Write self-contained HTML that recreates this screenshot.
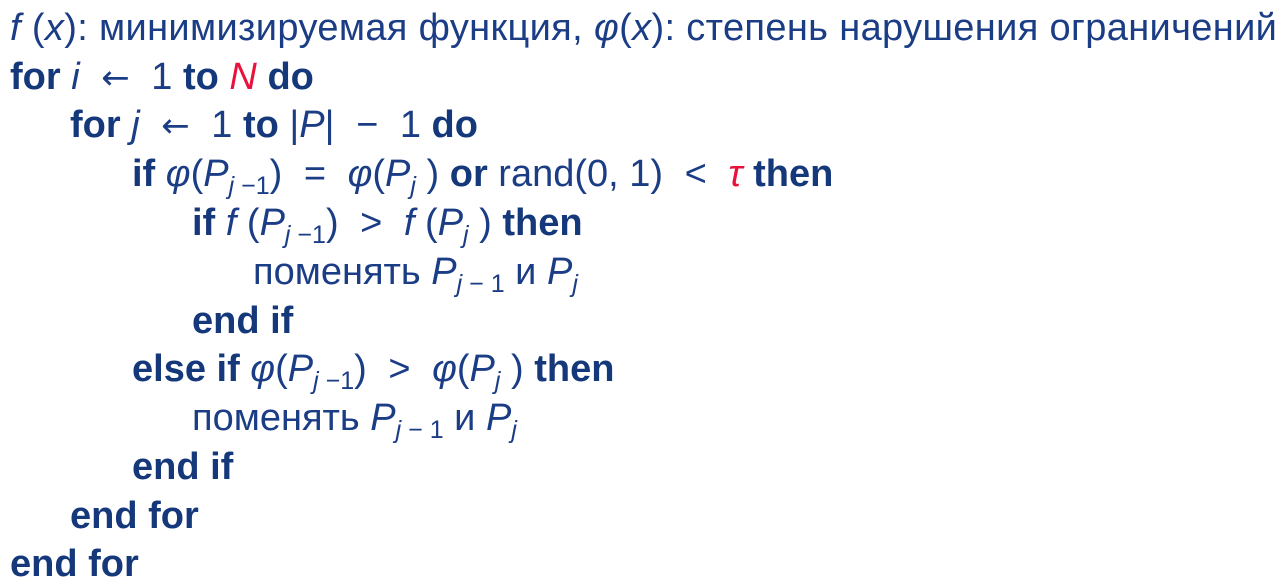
<!DOCTYPE html>
<html><head><meta charset="utf-8"><style>
html,body{margin:0;padding:0;background:#fff;width:1280px;height:582px;overflow:hidden}
body{font-family:"Liberation Sans","DejaVu Sans",sans-serif;color:#1b3d85;font-size:38px}
.l{position:absolute;white-space:nowrap;line-height:40px}
b{font-weight:bold;color:#14387a;letter-spacing:0}
i{font-style:italic}
.r{color:#e8123c}
.s{display:inline-block;width:11px}
.a{font-family:"DejaVu Sans",sans-serif;font-size:34px}
sub{font-size:25px;vertical-align:-8px;line-height:0}
</style></head><body>
<div class="l" style="left:10px;top:8px;letter-spacing:0.35px"><i>f</i> (<i>x</i>): минимизируемая функция, <i>φ</i>(<i>x</i>): степень нарушения ограничений</div>
<div class="l" style="left:10px;top:57px"><b>for</b> <i>i</i><span class="s"></span> <span class="a">←</span><span class="s"></span> 1 <b>to</b> <i class="r">N</i> <b>do</b></div>
<div class="l" style="left:70px;top:105px"><b>for</b> <i>j</i><span class="s"></span> <span class="a">←</span><span class="s"></span> 1 <b>to</b> |<i>P</i>|<span class="s"></span> −<span class="s"></span> 1 <b>do</b></div>
<div class="l" style="left:132px;top:154px"><b>if</b> <i>φ</i>(<i>P</i><sub><i>j</i> −1</sub>)<span class="s"></span> =<span class="s"></span> <i>φ</i>(<i>P</i><sub><i>j</i></sub> ) <b>or</b> rand(0, 1)<span class="s"></span> &lt;<span class="s"></span> <i class="r">τ</i> <b>then</b></div>
<div class="l" style="left:192px;top:203px"><b>if</b> <i>f</i> (<i>P</i><sub><i>j</i> −1</sub>)<span class="s"></span> &gt;<span class="s"></span> <i>f</i> (<i>P</i><sub><i>j</i></sub> ) <b>then</b></div>
<div class="l" style="left:253px;top:252px">поменять <i>P</i><sub><i>j</i> − 1</sub> и <i>P</i><sub><i>j</i></sub></div>
<div class="l" style="left:192px;top:301px"><b>end if</b></div>
<div class="l" style="left:132px;top:349px"><b>else if</b> <i>φ</i>(<i>P</i><sub><i>j</i> −1</sub>)<span class="s"></span> &gt;<span class="s"></span> <i>φ</i>(<i>P</i><sub><i>j</i></sub> ) <b>then</b></div>
<div class="l" style="left:192px;top:398px">поменять <i>P</i><sub><i>j</i> − 1</sub> и <i>P</i><sub><i>j</i></sub></div>
<div class="l" style="left:132px;top:447px"><b>end if</b></div>
<div class="l" style="left:70px;top:496px"><b>end for</b></div>
<div class="l" style="left:10px;top:544px"><b>end for</b></div>
</body></html>
